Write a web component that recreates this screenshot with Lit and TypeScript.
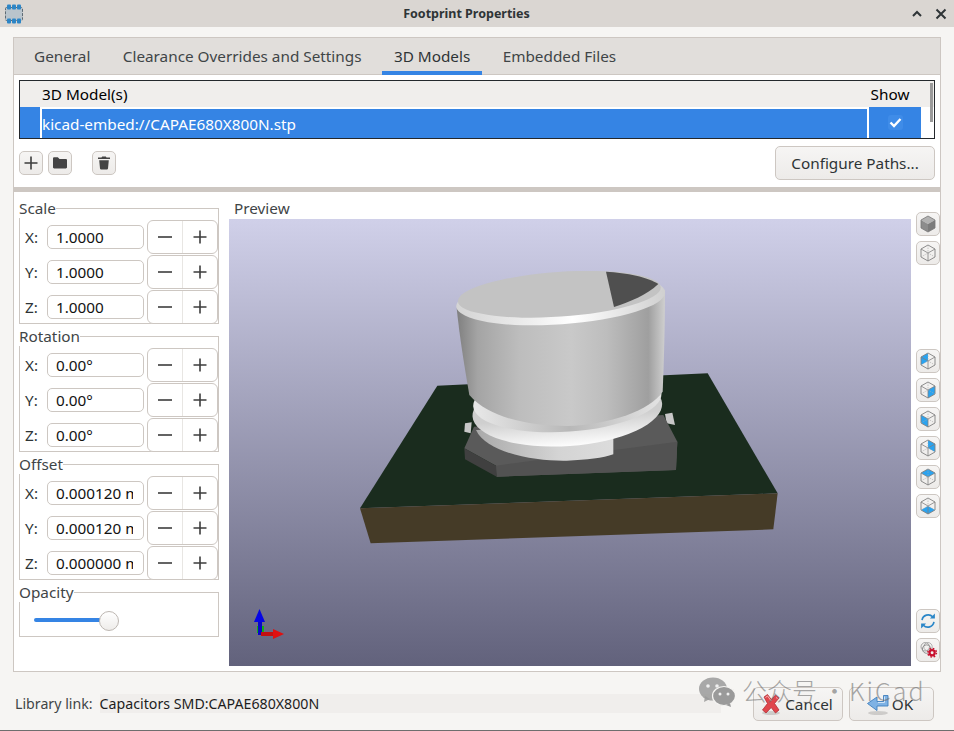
import { LitElement, html, css, svg } from "lit";
import { customElement } from "lit/decorators.js";

type Face = "none" | "solid" | "backLeft" | "right" | "left" | "backRight" | "top" | "bottom";

const FACES: Record<string, string> = {
  backLeft: "12,4 12,12 5,16 5,8",
  right: "12,12 19,8 19,16 12,20",
  left: "5,8 12,12 12,20 5,16",
  backRight: "12,4 19,8 19,16 12,12",
  top: "12,4 19,8 12,12 5,8",
  bottom: "12,12 19,16 12,20 5,16",
};

function cubeIcon(face: Face) {
  if (face === "solid") {
    return html`<svg width="24" height="24" viewBox="1 1 22 22">
      <polygon points="12,4 19,8 12,12 5,8" fill="#b2b2b2" />
      <polygon points="5,8 12,12 12,20 5,16" fill="#8c8c8c" />
      <polygon points="12,12 19,8 19,16 12,20" fill="#7c7c7c" />
      <path d="M12 4l7 4v8l-7 4-7-4V8z" fill="none" stroke="#777" stroke-width=".8" />
    </svg>`;
  }
  return html`<svg width="24" height="24" viewBox="1 1 22 22">
    ${face !== "none" ? svg`<polygon points=${FACES[face]} fill="#2aa3f0" />` : ""}
    <path d="M12 4l7 4v8l-7 4-7-4V8z" fill="none" stroke="#808080" stroke-width=".9" />
    <path d="M5 8l7 4 7-4M12 12v8" fill="none" stroke="#808080" stroke-width=".8" />
    <path d="M12 4v8M5 16l7-4 7 4" fill="none" stroke="#a8a8a8" stroke-width=".6" stroke-dasharray="1.5 1" />
  </svg>`;
}

const refreshIcon = html`<svg width="24" height="24" viewBox="0 0 24 24">
  <path d="M5.500 11a6.800 6.800 0 0 1 11.600-3.600" fill="none" stroke="#2a86c8" stroke-width="1.800" />
  <path d="M19.500 3.800v5.400h-5.400z" fill="#2a86c8" />
  <path d="M18.500 13a6.800 6.800 0 0 1-11.600 3.600" fill="none" stroke="#2a86c8" stroke-width="1.800" />
  <path d="M4.500 20.200v-5.400h5.400z" fill="#2a86c8" />
</svg>`;

const settingsIcon = html`<svg width="24" height="24" viewBox="0 0 24 24">
  <circle cx="9" cy="8.500" r="4.600" fill="none" stroke="#9a9a9a" stroke-width="1" />
  <circle cx="12" cy="8.500" r="4.600" fill="none" stroke="#aaa" stroke-width="1" />
  <circle cx="10.500" cy="11" r="4.600" fill="none" stroke="#888" stroke-width="1" />
  <circle cx="16.500" cy="15" r="2.800" fill="none" stroke="#c8102e" stroke-width="2.400" />
  <circle cx="16.500" cy="15" r="4.700" fill="none" stroke="#c8102e" stroke-width="1.600" stroke-dasharray="1.800 1.900" />
</svg>`;

const plusIcon = html`<svg width="16" height="16" viewBox="0 0 16 16">
  <path d="M8 1.500v13M1.500 8h13" stroke="#3d3d3d" stroke-width="1.600" />
</svg>`;

const minusIcon = html`<svg width="16" height="16" viewBox="0 0 16 16">
  <path d="M1 8h14" stroke="#3d3d3d" stroke-width="1.600" />
</svg>`;

const folderIcon = html`<svg width="18" height="18" viewBox="0 0 18 18">
  <path d="M2 4.500c0-.8.600-1.200 1.200-1.200h3.600l1.700 1.600h6.300c.7 0 1.200.5 1.200 1.200v7.200c0 .7-.5 1.200-1.200 1.200H3.200c-.7 0-1.200-.5-1.200-1.200z" fill="#444" />
</svg>`;

const trashIcon = html`<svg width="18" height="18" viewBox="0 0 18 18">
  <path d="M3 3.600h3.500l.7-1.100h3.600l.7 1.100H15v1.500H3zM4.200 6.200h9.600l-.8 8.300c-.1.700-.5 1-1.100 1H6.100c-.6 0-1-.3-1.100-1z" fill="#444" />
</svg>`;

const cancelIcon = html`<svg width="24" height="24" viewBox="0 0 24 24">
  <ellipse cx="12" cy="21" rx="9" ry="2" fill="#000" opacity=".14" />
  <path d="M5 5l3.500-2.500 3.800 5 4.200-4.500L20 6l-4.500 5.500L20 18l-3.500 3-4.300-5.500L7 21l-3.500-3 5-6.500z" fill="#e0464c" stroke="#b03038" stroke-width=".8" />
  <path d="M6.500 5.500l2-1.500 3.800 5M17 5.500l1.500 1" fill="none" stroke="#f6b3b3" stroke-width="1" />
</svg>`;

const okIcon = html`<svg width="24" height="24" viewBox="0 0 24 24">
  <ellipse cx="12" cy="21" rx="10" ry="2" fill="#000" opacity=".14" />
  <path d="M22 3.500v10.500H11v4.500L1.500 11.500 11 5v4.500h6.500v-6z" fill="#7fb2e4" stroke="#3f7fbd" stroke-width=".9" />
  <path d="M12 10.500h6.500v-6" fill="none" stroke="#cfe3f6" stroke-width="1" />
</svg>`;

const appIcon = html`<svg width="20" height="20" viewBox="0 0 20 20">
  <rect x="1.500" y="3.500" width="17" height="13" rx="1" fill="#b9c4cc" stroke="#5d6b75" stroke-width="1" stroke-dasharray="3 1.200" />
  ${[3, 8, 13].map(
    (x) => svg`
      <rect x=${x} y="0.500" width="4" height="5" rx="1" fill="#2c85c6" />
      <rect x=${x} y="14.500" width="4" height="5" rx="1" fill="#2c85c6" />
    `
  )}
</svg>`;

// 3D view, drawn in a 3x coordinate space so the shapes are easy to tweak
const scene = svg`
  <defs>
    <linearGradient id="wall" x1="0" x2="1" y1="0" y2="0">
      <stop offset="0" stop-color="#7f7f7f" />
      <stop offset=".1" stop-color="#a4a4a4" />
      <stop offset=".3" stop-color="#bdbdbd" />
      <stop offset=".55" stop-color="#c9c9c9" />
      <stop offset=".72" stop-color="#bdbdbd" />
      <stop offset=".92" stop-color="#9f9f9f" />
      <stop offset="1" stop-color="#cfcfcf" />
    </linearGradient>
    <linearGradient id="disc" x1="0" x2="1" y1="0" y2="0">
      <stop offset="0" stop-color="#a9a9a9" />
      <stop offset=".6" stop-color="#d4d4d4" />
      <stop offset="1" stop-color="#dcdcdc" />
    </linearGradient>
    <linearGradient id="band" x1="0" x2="1" y1="0" y2="0">
      <stop offset="0" stop-color="#e8e8e8" />
      <stop offset=".5" stop-color="#b8b8b8" />
      <stop offset="1" stop-color="#e4e4e4" />
    </linearGradient>
    <linearGradient id="ring" x1="0" x2="0" y1="0" y2="1">
      <stop offset=".6" stop-color="#cfcfcf" />
      <stop offset="1" stop-color="#fdfdfd" />
    </linearGradient>
    <linearGradient id="rim" x1="0" x2="1" y1="0" y2="0">
      <stop offset="0" stop-color="#d4d4d4" />
      <stop offset=".4" stop-color="#f2f2f2" />
      <stop offset=".55" stop-color="#ffffff" />
      <stop offset=".8" stop-color="#e4e4e4" />
      <stop offset="1" stop-color="#d0d0d0" />
    </linearGradient>
  </defs>
  <g transform="translate(121 41) scale(.33333)">
    <polygon points="262,377 1073,340 1283,700 30,745" fill="#1a2c1e" />
    <polygon points="30,745 1283,700 1270,808 62,850" fill="#453b27" />
    <polygon points="345,490 365,487 362,520 343,515" fill="#c8c8c8" />
    <polygon points="945,462 967,458 975,495 950,490" fill="#c8c8c8" />
    <polygon points="343,565 372,500 940,465 982,545 978,630 440,650 438,617" fill="#5a5a5a" />
    <polygon points="438,617 982,545 978,630 440,650" fill="#525252" />
    <polygon points="343,565 438,617 440,650 345,598" fill="#404040" />
    <path d="M378 510 C 410 580, 560 604, 650 602 C 710 600, 760 594, 790 583 L 790 500 Z" fill="url(#disc)" />
    <ellipse cx="652" cy="450" rx="285" ry="108" transform="rotate(-4 652 450)" fill="url(#ring)" />
    <ellipse cx="652" cy="420" rx="283" ry="95" transform="rotate(-4 652 420)" fill="url(#band)" />
    <path d="M320 145 C 330 240, 345 330, 358 405 C 420 480, 560 498, 650 498 C 780 495, 900 450, 938 395 C 942 300, 945 190, 945 90 Z" fill="url(#wall)" />
    <ellipse cx="632" cy="118" rx="314" ry="75" transform="rotate(-4 632 118)" fill="url(#rim)" />
    <ellipse cx="628" cy="103" rx="305" ry="67" transform="rotate(-4 628 103)" fill="#c3c3c3" />
    <path d="M768 35 C 830 38, 895 52, 925 72 C 890 105, 840 125, 792 141 Z" fill="#4f4f4f" />
  </g>
  <g transform="translate(-229 -219)">
    <rect x="257" y="626" width="7" height="7" fill="#12b012" />
    <rect x="258" y="620" width="4" height="15" fill="#0707c8" />
    <polygon points="259.500,609 265,622 254,622" fill="#0505e6" />
    <rect x="261" y="632" width="14" height="4" fill="#c41010" />
    <polygon points="284,634 273,629 273,639" fill="#e01010" />
  </g>
`;

@customElement("app-root")
export class AppRoot extends LitElement {
  static override styles = css`
    :host {
      display: block;
      width: 954px;
      height: 731px;
      position: relative;
      overflow: hidden;
      background: #f6f5f3;
      color: #2e3436;
      font-family: "Noto Sans", "Open Sans", sans-serif;
      font-size: 15.3px;
    }

    * {
      box-sizing: border-box;
    }

    .window {
      display: flex;
      flex-direction: column;
      height: 731px;
      border-bottom: 1px solid #6e6e6e;
    }

    .titlebar {
      display: flex;
      align-items: center;
      height: 27px;
      flex: none;
      padding: 0 4px;
      background: #dad6d2;
    }

    .titlebar .title {
      flex: 1;
      text-align: center;
      font-size: 12.5px;
      font-weight: 700;
      color: #2e3436;
    }

    .titlebar .controls {
      display: flex;
      gap: 8px;
      width: 41px;
    }

    .notebook {
      flex: none;
      display: flex;
      flex-direction: column;
      height: 635px;
      margin: 10px 13px 0;
      border: 1px solid #cdc7c2;
      background: #fff;
    }

    .tabs {
      display: flex;
      flex: none;
      gap: 8.4px;
      height: 37px;
      padding-left: 8px;
      background: #e1dedb;
      border-bottom: 1px solid #cdc7c2;
    }

    .tab {
      display: flex;
      align-items: center;
      height: 37px;
      padding: 0 12px 1px;
      white-space: nowrap;
      color: #3f4547;
    }

    .tab.active {
      box-shadow: inset 0 -4px 0 #3584e4;
      color: #2e3436;
    }

    .upper {
      flex: none;
      padding: 5px 5px 7px;
    }

    .grid {
      position: relative;
      display: flex;
      flex-direction: column;
      height: 59px;
      border: 1px solid #24282c;
      background: #fff;
      color: #000;
    }

    .grid .head {
      display: flex;
      align-items: center;
      height: 26px;
      flex: none;
      background: #f0eeec;
    }

    .grid .head .name {
      width: 847px;
      padding-left: 22px;
    }

    .grid .head .show {
      width: 46px;
      text-align: center;
    }

    .grid .row {
      display: flex;
      height: 31px;
    }

    .grid .rowlabel {
      width: 20px;
      background: #3584e4;
    }

    .grid .cell {
      width: 825px;
      margin: 2px 2px 0;
      line-height: 30px;
      background: #3584e4;
      color: #fff;
    }

    .grid .check {
      display: flex;
      align-items: center;
      justify-content: center;
      width: 52px;
      background: #3584e4;
    }

    .grid .box {
      display: flex;
      align-items: center;
      justify-content: center;
      width: 15px;
      height: 15px;
      border-radius: 3px;
      background: #3f8ce8;
    }

    .grid .scroll {
      position: absolute;
      top: 2px;
      right: 1px;
      width: 3px;
      height: 39px;
      background: #9a9a9a;
    }

    .tools {
      display: flex;
      align-items: center;
      height: 34px;
      margin-top: 7px;
    }

    .tools .spacer {
      flex: 1;
    }

    .btn {
      display: flex;
      align-items: center;
      justify-content: center;
      flex: none;
      border: 1px solid #cdc7c2;
      border-radius: 5px;
      background: linear-gradient(#f6f5f4, #edebe9);
      white-space: nowrap;
    }

    .btn.icon {
      width: 24px;
      height: 24px;
    }

    .btn.wide {
      width: 160px;
      height: 34px;
    }

    .gap5 {
      margin-left: 5px;
    }

    .gap20 {
      margin-left: 20px;
    }

    .sash {
      flex: none;
      height: 5px;
      background: #cdc7c2;
    }

    .lower {
      flex: 1;
      display: flex;
      min-height: 0;
      padding-left: 5px;
    }

    .props {
      width: 200px;
      flex: none;
      padding-top: 6px;
    }

    fieldset {
      display: block;
      margin: 0 0 2px;
      padding: 1px 0 0;
      min-width: 0;
      border: 1px solid #cdc7c2;
    }

    legend {
      margin-left: -1px;
      padding: 0;
      height: 20px;
      line-height: 20px;
      color: #3f4547;
    }

    .prop {
      display: flex;
      align-items: center;
      height: 35px;
      padding-left: 5px;
    }

    .rows {
      margin-bottom: -1px;
    }

    .prop .axis {
      width: 22px;
    }

    .prop .input {
      width: 97px;
      height: 24px;
      padding: 0 10px 0 8px;
      border: 1px solid #cdc7c2;
      border-radius: 5px;
      background: #fff;
      color: #111;
      line-height: 23px;
    }

    .prop .input span {
      display: block;
      overflow: hidden;
      white-space: nowrap;
    }

    .spin {
      display: flex;
      width: 71px;
      height: 34px;
      margin-left: 3px;
      border: 1px solid #cdc7c2;
      border-radius: 6px;
      background: #fff;
    }

    .spin div {
      flex: 1;
      display: flex;
      align-items: center;
      justify-content: center;
    }

    .spin div + div {
      border-left: 1px solid #e8e6e3;
    }

    .opacity {
      height: 55px;
      padding: 0;
    }

    .slider {
      position: relative;
      height: 4px;
      width: 67px;
      margin: 16px 0 0 14px;
      border-radius: 2px;
      background: #3584e4;
    }

    .slider .thumb {
      position: absolute;
      left: 65px;
      top: -7px;
      width: 20px;
      height: 20px;
      border: 1px solid #bdb7b2;
      border-radius: 50%;
      background: linear-gradient(#fff, #eeecea);
    }

    .preview {
      width: 682px;
      flex: none;
      display: flex;
      flex-direction: column;
      margin-left: 10px;
      padding: 6px 0 5px;
    }

    .preview .label {
      height: 21px;
      padding-left: 5px;
      line-height: 20px;
      color: #3f4547;
    }

    .canvas {
      display: block;
      width: 682px;
      height: 447px;
      background: linear-gradient(#d0d0e9, #62627c);
    }

    .viewbar {
      flex: none;
      display: flex;
      flex-direction: column;
      width: 24px;
      margin-left: 5px;
      padding-top: 20px;
    }

    .viewbar .group {
      display: flex;
      flex-direction: column;
      gap: 5px;
    }

    .viewbar .mid {
      margin-top: 84px;
    }

    .viewbar .end {
      margin-top: 91px;
    }

    .footer {
      flex: none;
      display: flex;
      height: 58px;
      padding: 15px 7px 0 15px;
    }

    .footer .link {
      display: flex;
      align-items: center;
      width: 706px;
      height: 33px;
      font-size: 14.2px;
      white-space: nowrap;
      color: #3f4547;
    }

    .footer .value {
      flex: 1;
      height: 19px;
      margin-left: 7px;
      line-height: 19px;
      background: #f0eeec;
      color: #1d1d1d;
    }

    .footer .btn {
      gap: 2px;
      height: 34px;
      padding-right: 4px;
    }

    .footer .cancel {
      width: 90px;
      margin-left: 32px;
    }

    .footer .ok {
      width: 85px;
      margin-left: 6px;
    }

    .watermark {
      position: absolute;
      left: 699px;
      top: 676px;
      display: flex;
      align-items: center;
      height: 32px;
      font-family: "Noto Sans CJK SC", "Noto Sans", sans-serif;
      font-size: 25px;
      font-weight: 300;
      color: rgba(110, 110, 110, 0.6);
      white-space: nowrap;
      pointer-events: none;
    }

    .watermark svg {
      margin-right: 7px;
    }

    .watermark span {
      margin-top: -4px;
    }

    .watermark .sep {
      margin: -4px 2px 0 5px;
    }

    .watermark .brand {
      letter-spacing: 2px;
    }
  `;

  private _scale = ["1.0000", "1.0000", "1.0000"];
  private _rotation = ["0.00°", "0.00°", "0.00°"];
  private _offset = ["0.000120 mm", "0.000120 mm", "0.000000 mm"];

  private _group(title: string, values: string[]) {
    const axes = ["X:", "Y:", "Z:"];
    return html`
      <fieldset>
        <legend>${title}</legend>
        <div class="rows">
          ${values.map(
            (v, i) => html`
              <div class="prop">
                <div class="axis">${axes[i]}</div>
                <div class="input"><span>${v}</span></div>
                <div class="spin">
                  <div>${minusIcon}</div>
                  <div>${plusIcon}</div>
                </div>
              </div>
            `
          )}
        </div>
      </fieldset>
    `;
  }

  override render() {
    const tabs = ["General", "Clearance Overrides and Settings", "3D Models", "Embedded Files"];
    const faces: Face[] = ["backLeft", "right", "left", "backRight", "top", "bottom"];
    return html`
      <div class="window">
        <div class="titlebar">
          ${appIcon}
          <div class="title">Footprint Properties</div>
          <div class="controls">
            <svg width="16" height="16" viewBox="0 0 16 16">
              <path d="M4 10l4-4 4 4" fill="none" stroke="#2e3436" stroke-width="2" />
            </svg>
            <svg width="16" height="16" viewBox="0 0 16 16">
              <path d="M3.500 3.500l9 9M12.500 3.500l-9 9" fill="none" stroke="#2e3436" stroke-width="2" />
            </svg>
          </div>
        </div>

        <div class="notebook">
          <div class="tabs">
            ${tabs.map((t) => html`<div class="tab ${t === "3D Models" ? "active" : ""}">${t}</div>`)}
          </div>

          <div class="upper">
            <div class="grid">
              <div class="head">
                <div class="name">3D Model(s)</div>
                <div class="show">Show</div>
              </div>
              <div class="row">
                <div class="rowlabel"></div>
                <div class="cell">kicad-embed://CAPAE680X800N.stp</div>
                <div class="check">
                  <div class="box">
                    <svg width="13" height="11" viewBox="0 0 13 11">
                      <path d="M1.500 5.500l3.500 3.500 6.500-7" fill="none" stroke="#fff" stroke-width="2.400" />
                    </svg>
                  </div>
                </div>
              </div>
              <div class="scroll"></div>
            </div>
            <div class="tools">
              <div class="btn icon">${plusIcon}</div>
              <div class="btn icon gap5">${folderIcon}</div>
              <div class="btn icon gap20">${trashIcon}</div>
              <div class="spacer"></div>
              <div class="btn wide">Configure Paths...</div>
            </div>
          </div>

          <div class="sash"></div>

          <div class="lower">
            <div class="props">
              ${this._group("Scale", this._scale)}
              ${this._group("Rotation", this._rotation)}
              ${this._group("Offset", this._offset)}
              <fieldset class="opacity">
                <legend>Opacity</legend>
                <div class="slider"><div class="thumb"></div></div>
              </fieldset>
            </div>

            <div class="preview">
              <div class="label">Preview</div>
              <svg class="canvas" viewBox="0 0 682 447">${scene}</svg>
            </div>

            <div class="viewbar">
              <div class="group">
                <div class="btn icon">${cubeIcon("solid")}</div>
                <div class="btn icon">${cubeIcon("none")}</div>
              </div>
              <div class="group mid">
                ${faces.map((f) => html`<div class="btn icon">${cubeIcon(f)}</div>`)}
              </div>
              <div class="group end">
                <div class="btn icon">${refreshIcon}</div>
                <div class="btn icon">${settingsIcon}</div>
              </div>
            </div>
          </div>
        </div>

        <div class="footer">
          <div class="link">
            Library link:
            <div class="value">Capacitors SMD:CAPAE680X800N</div>
          </div>
          <div class="btn cancel">${cancelIcon}Cancel</div>
          <div class="btn ok">${okIcon}OK</div>
        </div>
      </div>

      <div class="watermark">
        <svg width="36" height="30" viewBox="0 0 36 30">
          <ellipse cx="14" cy="12" rx="14" ry="11.500" fill="#9a9a9a" opacity=".85" />
          <path d="M6 19l-1 6 6-3z" fill="#9a9a9a" opacity=".85" />
          <ellipse cx="25" cy="19" rx="11.500" ry="9.500" fill="#9a9a9a" stroke="#f6f5f3" stroke-width="1.200" />
          <path d="M31 26l1 4-5-2z" fill="#9a9a9a" />
          <circle cx="9" cy="9" r="1.800" fill="#f0f0f0" />
          <circle cx="18" cy="9" r="1.800" fill="#f0f0f0" />
          <circle cx="21" cy="17" r="1.500" fill="#f0f0f0" />
          <circle cx="29" cy="17" r="1.500" fill="#f0f0f0" />
        </svg>
        <span>公众号</span><span class="sep">·</span><span class="brand">KiCad</span>
      </div>
    `;
  }
}

declare global {
  interface HTMLElementTagNameMap {
    "app-root": AppRoot;
  }
}
